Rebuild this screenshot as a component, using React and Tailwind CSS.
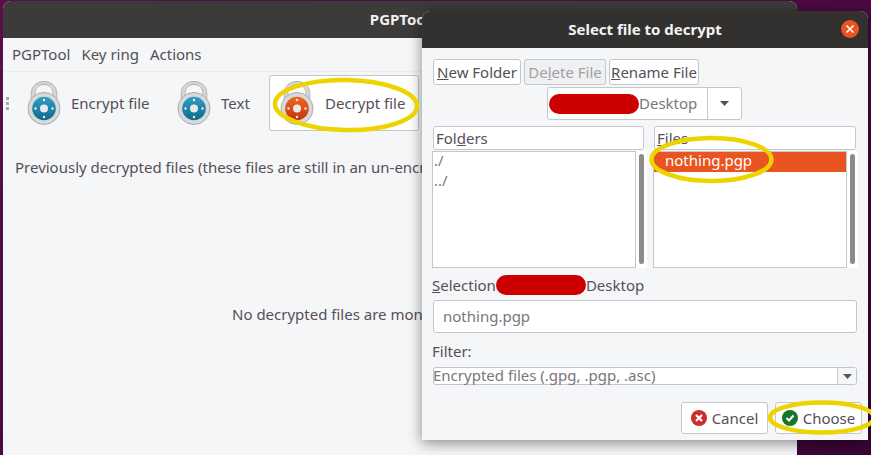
import React from 'react';

const font = { fontFamily: '"Noto Sans", "Open Sans", sans-serif' };

function Lock({ a = '#2f9fc4', b = '#0f6a8c' }) {
  const id = a.slice(1);
  return <svg width="34" height="44" viewBox="0 0 34 44" className="shrink-0">
      <defs>
        <linearGradient id={id} x1="0" y1="0" x2="0" y2="1">
          <stop offset="0" stopColor={a} />
          <stop offset="1" stopColor={b} />
        </linearGradient>
      </defs>
      <path d="M6 22V13C6 6 10.500 2 17 2S28 6 28 13V22" fill="none" stroke="#d6d7d8" strokeWidth="3.500" />
      <path d="M4.200 20V13C4.200 5 10 0.500 17 0.500S29.800 5 29.800 13V20" fill="none" stroke="#a4a6a8" strokeWidth="0.800" />
      <path d="M8 22V13C8 7 11.500 3.500 17 3.500S26 7 26 13V22" fill="none" stroke="#9a9c9e" strokeWidth="0.700" />
      <circle cx="17" cy="27.500" r="16" fill="#d8d9da" stroke="#a9abad" strokeWidth="1" />
      <circle cx="17" cy="27.500" r="11.800" fill={`url(#${id})`} />
      <circle cx="17" cy="27.500" r="4" fill="#e8e9ea" />
      <circle cx="17" cy="19" r="1.200" fill="#eef0f1" />
      <circle cx="17" cy="36" r="1.200" fill="#eef0f1" />
      <circle cx="8.500" cy="27.500" r="1.200" fill="#eef0f1" />
      <circle cx="25.500" cy="27.500" r="1.200" fill="#eef0f1" />
    </svg>;
}

function ToolItem({ label, children, active, className }) {
  return <div className={`flex items-center h-[56px] ${active ? 'bg-white border border-[#c3c7cc] rounded-[3px]' : ''} ${className}`}>
      {children}
      <span className="text-[15px] text-[#544f58]">{label}</span>
    </div>;
}

function DialogButton({ children, className }) {
  return <div className={`flex items-center justify-center border border-[#c3c7cc] rounded-[3px] text-[15px] ${className}`}>{children}</div>;
}

function Blot({ className }) {
  return <div className={`h-[20px] bg-[#cc0000] rounded-[10px] shrink-0 ${className}`} />;
}

function FileList({ width, children }) {
  return <div className="flex">
      <div className={`h-[117px] bg-white border border-[#c3c7cc] overflow-hidden ${width}`}>{children}</div>
      <div className="w-[11px] h-[117px] bg-white flex justify-center pt-[3px]">
        <div className="w-[5px] h-[110px] bg-[#8b8b8b] rounded-[3px]" />
      </div>
    </div>;
}

function ComboArrow() {
  return <svg width="9" height="5" viewBox="0 0 9 5"><path d="M0 0H9L4.500 5Z" fill="#555" /></svg>;
}

export default function App() {
  return <div className="relative w-[871px] h-[455px] overflow-hidden bg-[#4a0a3f]" style={font}>
      {/* wallpaper */}
      <div className="absolute inset-0 bg-gradient-to-br from-[#5a0f4c] to-[#3a0535]" />

      {/* main window */}
      <div className="absolute left-[3px] top-[1px] w-[794px] h-[454px] flex flex-col bg-[#f5f6f7] rounded-t-[8px] overflow-hidden">
        <div className="h-[37px] shrink-0 bg-[#3d3b39] flex justify-center items-center">
          <span className="text-[15px] font-bold text-[#f2f2f2]">PGPTool</span>
        </div>
        <div className="h-[34px] shrink-0 flex items-center gap-[11px] pl-[9px] border-b border-[#ecedee] text-[15px] text-[#544f58]">
          <span>PGPTool</span>
          <span>Key ring</span>
          <span>Actions</span>
        </div>
        <div className="flex items-start h-[60px] shrink-0 pl-[3px] pt-[3px]">
          <div className="grid grid-cols-1 gap-[2px] w-[3px] mr-[18px] mt-[22px]">
            <div className="h-[3px] bg-[#a8a8a8]" />
            <div className="h-[3px] bg-[#a8a8a8]" />
            <div className="h-[3px] bg-[#a8a8a8]" />
          </div>
          <ToolItem label="Encrypt file" className="gap-[10px] w-[150px]"><Lock /></ToolItem>
          <ToolItem label="Text" className="gap-[10px] w-[92px]"><Lock /></ToolItem>
          <ToolItem label="Decrypt file" active className="gap-[11px] w-[150px] pl-[10px]"><Lock a="#ee6a1f" b="#c4320f" /></ToolItem>
        </div>
        <p className="text-[15px] text-[#544f58] pl-[12px] mt-[24px] whitespace-nowrap">Previously decrypted files (these files are still in an un-encrypted form)</p>
        <p className="text-[15px] text-[#544f58] pl-[229px] mt-[124px] whitespace-nowrap">No decrypted files are monitored</p>
      </div>

      {/* dialog */}
      <div className="absolute left-[422px] top-[11px] w-[446px] h-[429px] flex flex-col bg-[#f5f6f7] rounded-t-[8px] shadow-[0_3px_14px_rgba(0,0,0,0.45)] overflow-hidden">
        <div className="h-[37px] shrink-0 bg-[#333130] flex items-center justify-center relative">
          <span className="text-[15px] font-bold text-[#f2f2f2]">Select file to decrypt</span>
          <div className="absolute right-[9px] top-[9px] w-[18px] h-[18px] rounded-full bg-[#e95420] flex items-center justify-center">
            <svg width="10" height="10" viewBox="0 0 10 10"><path d="M1.500 1.500L8.500 8.500M8.500 1.500L1.500 8.500" stroke="#fff" strokeWidth="1.600" /></svg>
          </div>
        </div>

        <div className="flex flex-col pl-[11px] pr-[10px]">
          <div className="flex gap-[3px] mt-[11px]">
            <DialogButton className="w-[88px] h-[26px] bg-white text-[#544f58]"><span><u>N</u>ew Folder</span></DialogButton>
            <DialogButton className="w-[82px] h-[26px] bg-[#eff0f1] text-[#a0a0a5]"><span>De<u>l</u>ete File</span></DialogButton>
            <DialogButton className="w-[90px] h-[26px] bg-white text-[#544f58]"><span><u>R</u>ename File</span></DialogButton>
          </div>

          <div className="self-start ml-[114px] mt-[2px] w-[195px] h-[33px] flex bg-white border border-[#c3c7cc] rounded-[3px]">
            <div className="flex-1 flex items-center pl-[1px] text-[15px] text-[#7a767c]">
              <Blot className="w-[90px]" />
              <span>Desktop</span>
            </div>
            <div className="w-[34px] border-l border-[#c3c7cc] flex items-center justify-center"><ComboArrow /></div>
          </div>

          <div className="flex gap-[10px] mt-[6px]">
            <div className="w-[211px] h-[24px] flex items-center pl-[2px] bg-white border border-[#c3c7cc] rounded-[3px] text-[15px] text-[#544f58]"><span>Fol<u>d</u>ers</span></div>
            <div className="w-[202px] h-[24px] flex items-center pl-[2px] bg-white border border-[#c3c7cc] rounded-[3px] text-[15px] text-[#544f58]"><span><u>F</u>iles</span></div>
          </div>

          <div className="flex gap-[6px] mt-[1px] -ml-[1px]">
            <FileList width="w-[204px]">
              <div className="flex flex-col gap-[4px] text-[15px] leading-[16px] text-[#7a767c] pl-[1px]">
                <div>./</div>
                <div>../</div>
              </div>
            </FileList>
            <FileList width="w-[194px]">
              <div className="h-[20px] bg-[#e95420] text-[15px] leading-[16px] text-white pl-[11px]">nothing.pgp</div>
            </FileList>
          </div>

          <div className="flex items-center h-[20px] mt-[7px] -ml-[1px] text-[15px] text-[#544f58] whitespace-nowrap">
            <span><u>S</u>election</span>
            <Blot className="w-[90px]" />
            <span>Desktop</span>
          </div>

          <div className="w-[424px] h-[33px] mt-[5px] flex items-center pl-[9px] bg-white border border-[#c3c7cc] rounded-[3px] text-[15px] text-[#7a767c]">nothing.pgp</div>

          <div className="text-[15px] leading-[20px] text-[#544f58] mt-[8px] -ml-[1px]">Filter:</div>

          <div className="w-[424px] h-[18px] mt-[6px] flex bg-white border border-[#c3c7cc] rounded-[3px]">
            <div className="flex-1 -ml-[1px] text-[15px] leading-[15px] text-[#7a767c] whitespace-nowrap">Encrypted files (.gpg, .pgp, .asc)</div>
            <div className="w-[19px] border-l border-[#c3c7cc] flex items-center justify-center bg-[#f5f6f7]"><ComboArrow /></div>
          </div>

          <div className="flex justify-end gap-[7px] mt-[17px] -mr-[4px]">
            <DialogButton className="w-[87px] h-[32px] gap-[5px] bg-white text-[#544f58]">
              <svg width="16" height="16" viewBox="0 0 16 16">
                <circle cx="8" cy="8" r="8" fill="#c9302c" />
                <path d="M5 5L11 11M11 5L5 11" stroke="#fff" strokeWidth="2.200" />
              </svg>
              <span>Cancel</span>
            </DialogButton>
            <DialogButton className="w-[87px] h-[32px] gap-[5px] bg-white text-[#544f58]">
              <svg width="16" height="16" viewBox="0 0 16 16">
                <circle cx="8" cy="8" r="8" fill="#14772c" />
                <path d="M4.500 8L7 10.500L11.500 5.500" fill="none" stroke="#fff" strokeWidth="2" />
              </svg>
              <span>Choose</span>
            </DialogButton>
          </div>
        </div>
      </div>

      {/* hand-drawn highlight marks */}
      <svg width="871" height="455" viewBox="0 0 871 455" className="absolute inset-0 pointer-events-none">
        <g fill="none" stroke="#edd400" strokeWidth="4.500">
          <ellipse cx="346" cy="105" rx="71" ry="25" transform="rotate(1 346 105)" />
          <ellipse cx="711.500" cy="159.500" rx="60" ry="21.500" />
          <ellipse cx="822" cy="417.500" rx="52" ry="15" />
        </g>
      </svg>
    </div>;
}
